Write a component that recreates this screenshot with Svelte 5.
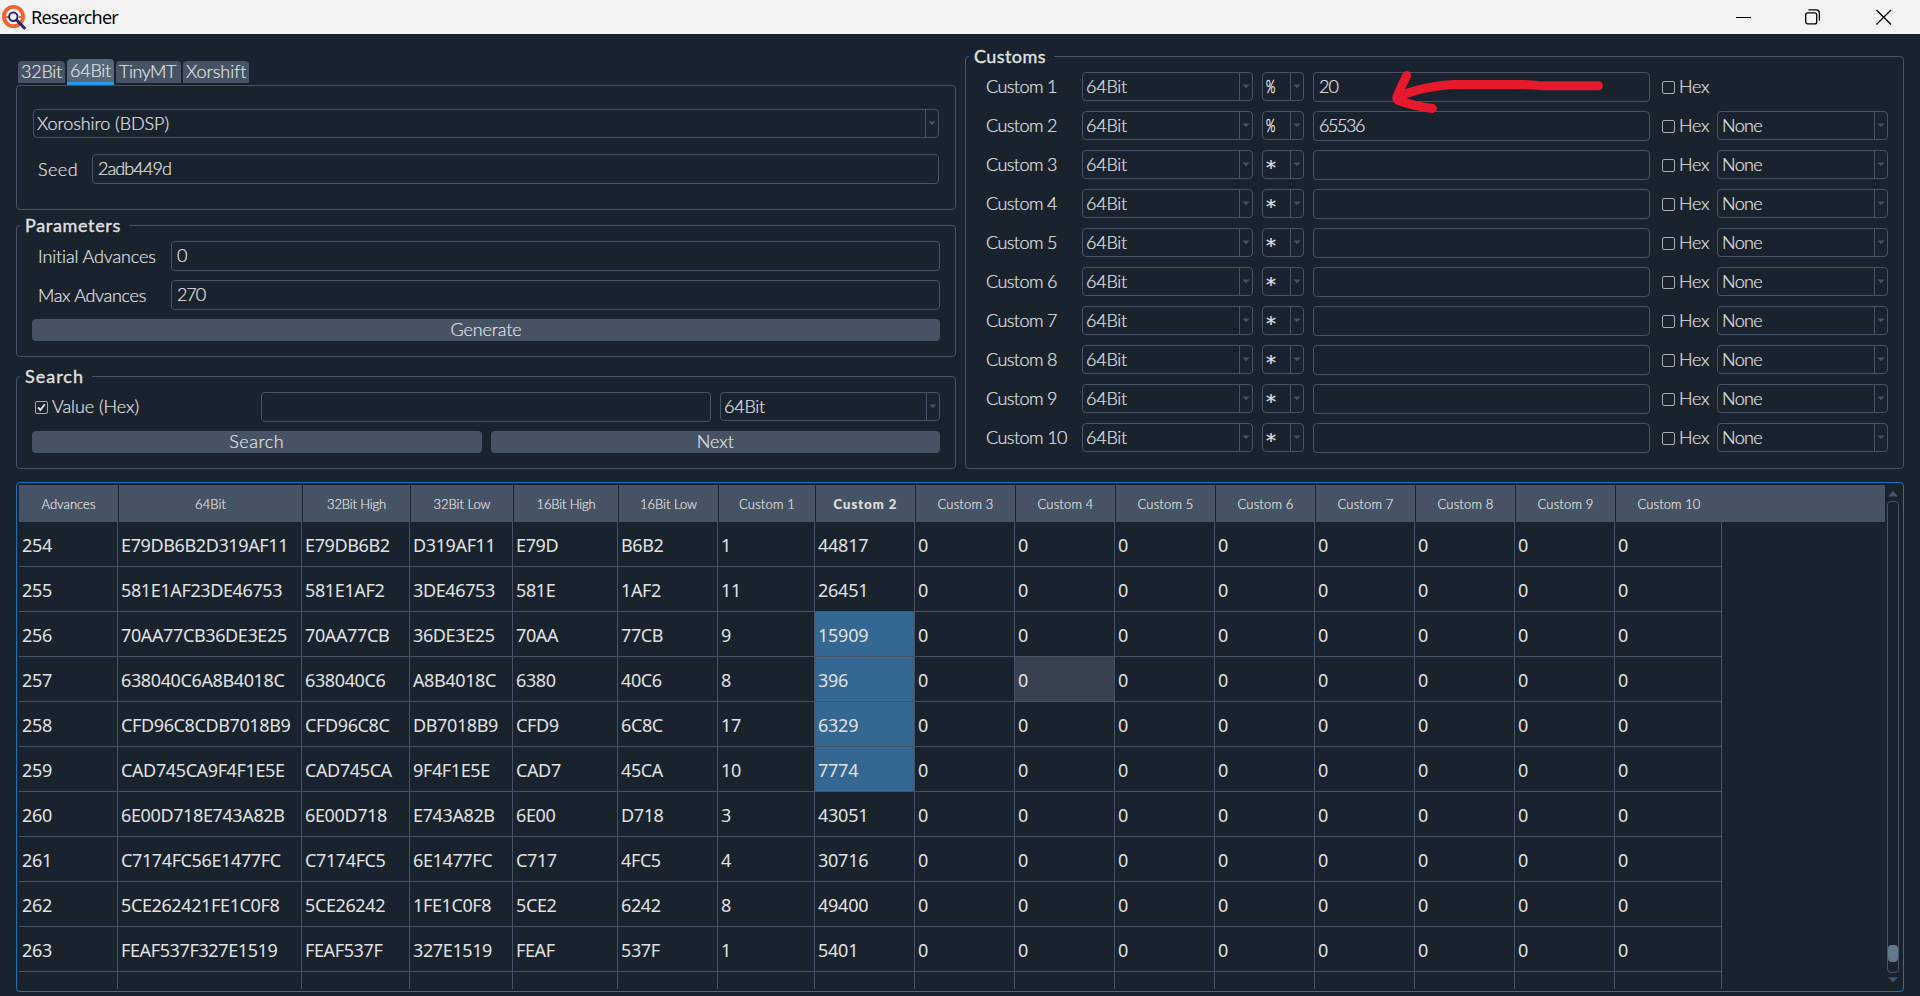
<script>
  function fit(node, width) {
    const apply = (w) => {
      if (!w) return;
      node.style.letterSpacing = '0px';
      const natural = node.getBoundingClientRect().width;
      const count = node.textContent.length;
      node.style.letterSpacing = (w - natural) / count + 'px';
    };
    apply(width);
    return { update: apply };
  }

  const tabs = [
    { label: '32Bit', text: 41, width: 47 },
    { label: '64Bit', text: 41, width: 47, active: true },
    { label: 'TinyMT', text: 57, width: 65 },
    { label: 'Xorshift', text: 60, width: 66 }
  ];

  const customs = Array.from({ length: 10 }, (_, i) => ({
    n: i + 1,
    op: i < 2 ? '%' : '*',
    value: ['20', '65536'][i] ?? '',
    valueWidth: [19, 45][i] ?? 0,
    chained: i > 0
  }));

  const columns = [
    { label: 'Advances', width: 99, text: 54 },
    { label: '64Bit', width: 184, text: 31 },
    { label: '32Bit High', width: 108, text: 59 },
    { label: '32Bit Low', width: 103, text: 57 },
    { label: '16Bit High', width: 105, text: 59 },
    { label: '16Bit Low', width: 100, text: 57 },
    { label: 'Custom 1', width: 97, text: 56 },
    { label: 'Custom 2', width: 100, text: 64, bold: true },
    ...[3, 4, 5, 6, 7, 8, 9].map((n) => ({ label: 'Custom ' + n, width: 100, text: 56 })),
    { label: 'Custom 10', width: 107, text: 63 }
  ];
  const gridColumns = columns.map((c) => c.width + 'px').join(' ');

  const values = [
    ['E79DB6B2D319AF11', 1, 44817],
    ['581E1AF23DE46753', 11, 26451],
    ['70AA77CB36DE3E25', 9, 15909],
    ['638040C6A8B4018C', 8, 396],
    ['CFD96C8CDB7018B9', 17, 6329],
    ['CAD745CA9F4F1E5E', 10, 7774],
    ['6E00D718E743A82B', 3, 43051],
    ['C7174FC56E1477FC', 4, 30716],
    ['5CE262421FE1C0F8', 8, 49400],
    ['FEAF537F327E1519', 1, 5401]
  ];
  const rows = values.map(([hex, c1, c2], i) => [
    254 + i, hex, hex.slice(0, 8), hex.slice(8), hex.slice(0, 4), hex.slice(4, 8), c1, c2,
    ...Array(8).fill(0)
  ]);
  const selected = (r, c) => c === 7 && r >= 2 && r <= 5;
  const hovered = (r, c) => r === 3 && c === 9;
</script>

{#snippet combo(label, width, kind)}
  <div class="combo {kind}">
    <span class="combo-text"><span use:fit={width}>{label}</span></span>
    <span class="drop"><svg width="8" height="5" viewBox="0 0 8 5"><path d="M0.5 0.5H7.5L4 4.3Z" fill="#455364" /></svg></span>
  </div>
{/snippet}

<div class="window">
  <header class="titlebar">
    <svg class="logo" width="26" height="28" viewBox="0 0 26 28">
      <circle cx="11.5" cy="12.5" r="9.6" fill="none" stroke="#f26430" stroke-width="3.8" />
      <path d="M3 13H7M17 13H21" stroke="#f26430" stroke-width="2" />
      <circle cx="11.3" cy="12.8" r="4.2" fill="#f3f3f3" stroke="#2a2a72" stroke-width="2" />
      <path d="M14.6 16L22.2 23.8" stroke="#2a2a72" stroke-width="3" stroke-linecap="square" />
    </svg>
    <span class="app-name"><span use:fit={87}>Researcher</span></span>
    <div class="controls">
      <svg width="16" height="16" viewBox="0 0 16 16"><path d="M0 8.5H15" stroke="#000" /></svg>
      <svg width="16" height="16" viewBox="0 0 16 16" fill="none" stroke="#000" stroke-width="1.3">
        <rect x="0.7" y="3.9" width="11" height="11" rx="2" />
        <path d="M3.4 0.9H11.2A3.4 3.4 0 0 1 14.4 4.2V11.8" />
      </svg>
      <svg width="16" height="16" viewBox="0 0 16 16"><path d="M0.5 1L15 15.5M15 1L0.5 15.5" stroke="#000" stroke-width="1.3" /></svg>
    </div>
  </header>

  <main>
    <div class="top">
      <div class="left">
        <nav class="tabs">
          {#each tabs as tab}
            <div class="tab" class:active={tab.active} style:width="{tab.width}px"><span use:fit={tab.text}>{tab.label}</span></div>
          {/each}
        </nav>
        <section class="pane">
          {@render combo('Xoroshiro (BDSP)', 132, 'wide')}
          <div class="seed-row">
            <label for="seed"><span use:fit={40}>Seed</span></label>
            <div id="seed" class="field"><span use:fit={73}>2adb449d</span></div>
          </div>
        </section>

        <section class="group parameters">
          <h2><span use:fit={96}>Parameters</span></h2>
          <div class="param-row">
            <div class="caption"><span use:fit={118}>Initial Advances</span></div>
            <div class="field"><span use:fit={10}>0</span></div>
          </div>
          <div class="param-row">
            <div class="caption"><span use:fit={108}>Max Advances</span></div>
            <div class="field"><span use:fit={28}>270</span></div>
          </div>
          <div class="button"><span use:fit={71}>Generate</span></div>
        </section>

        <section class="group search">
          <h2><span use:fit={59}>Search</span></h2>
          <div class="search-row">
            <div class="check">
              <span class="box"><svg width="9" height="9" viewBox="0 0 9 9"><path d="M1 4.3L3.4 7L7.8 1.2" fill="none" stroke="#e0e1e3" stroke-width="1.9" /></svg></span>
              <span class="check-text"><span use:fit={87}>Value (Hex)</span></span>
            </div>
            <div class="field"></div>
            {@render combo('64Bit', 41, 'size')}
          </div>
          <div class="buttons">
            <div class="button"><span use:fit={55}>Search</span></div>
            <div class="button"><span use:fit={37}>Next</span></div>
          </div>
        </section>
      </div>

      <section class="group customs">
        <h2><span use:fit={72}>Customs</span></h2>
        {#each customs as c}
          <div class="custom-row">
            <div class="caption"><span use:fit={c.n === 10 ? 81 : 71}>Custom {c.n}</span></div>
            {@render combo('64Bit', 41, 'source')}
            {@render combo(c.op, 0, c.op === '*' ? 'op star' : 'op percent')}
            <div class="field"><span use:fit={c.valueWidth}>{c.value}</span></div>
            <div class="check"><span class="box"></span><span class="check-text"><span use:fit={30}>Hex</span></span></div>
            {#if c.chained}{@render combo('None', 40, 'chain')}{/if}
          </div>
        {/each}
      </section>
    </div>

    <section class="results">
      <div class="table">
        <div class="head" style:grid-template-columns={gridColumns}>
          {#each columns as col}
            <div class="th" class:bold={col.bold}><span use:fit={col.text}>{col.label}</span></div>
          {/each}
        </div>
        <div class="body">
          {#each rows as row, r}
            <div class="row" style:grid-template-columns={gridColumns}>
              {#each row as cell, c}
                <div class="td" class:hex={c > 0 && c < 6} class:selected={selected(r, c)} class:hovered={hovered(r, c)}>{cell}</div>
              {/each}
            </div>
          {/each}
          <div class="row" style:grid-template-columns={gridColumns}>
            {#each columns as _}<div class="td"></div>{/each}
          </div>
        </div>
      </div>
      <div class="scroll">
        <svg width="10" height="6" viewBox="0 0 10 6"><path d="M0 5.5L5 0L10 5.5Z" fill="#455364" /></svg>
        <div class="groove"><div class="thumb"></div></div>
        <svg width="10" height="6" viewBox="0 0 10 6"><path d="M0 0.3L5 5.5L10 0.3Z" fill="#455364" /></svg>
      </div>
    </section>
  </main>

  <svg class="arrow" width="220" height="50" viewBox="1390 68 220 50" fill="none" stroke="#e6192d" stroke-width="9" stroke-linecap="round" stroke-linejoin="round">
    <path d="M1598.5 85.8H1543C1534 85.2 1530 84.4 1522 84.4H1453C1437 85.2 1414 89.5 1398 97" />
    <path d="M1406.7 75.5C1403 83 1398.5 92 1397 97C1396.4 99.5 1398 101 1401 101.5C1410 104.5 1422 107 1432.3 108.5" />
    <path d="M1400 96L1403 99" />
  </svg>
</div>

<style>
  :global(body) { background: #19232d; }
  .window {
    position: relative;
    width: 1920px;
    height: 996px;
    overflow: hidden;
    background: #19232d;
    color: #e0e1e3;
    font: 300 18px/22px Lato, "Liberation Sans", sans-serif;
    white-space: nowrap;
  }
  .window :global(*) { box-sizing: border-box; }
  main { -webkit-text-stroke: 0.2px #e0e1e3; }
  svg { display: block; flex: none; }
  span { display: inline-block; }

  .titlebar {
    display: flex;
    align-items: center;
    height: 34px;
    padding: 0 28px 0 2px;
    background: #f3f3f3;
    color: #000;
  }
  .logo { margin-top: 2px; }
  .app-name { margin: -1px auto 0 3px; font: 400 18px/24px "Noto Sans", sans-serif; }
  .controls { display: flex; gap: 53px; padding-bottom: 1px; }
  .controls svg:last-child { margin-left: 2px; }

  main { padding: 22px 16px 0; }
  .top { display: flex; gap: 9px; height: 413px; }
  .left { display: flex; flex-direction: column; width: 940px; }

  .tabs { display: flex; gap: 2px; padding: 3px 2px 0; height: 29px; }
  .tab {
    margin-top: 2px;
    height: 22px;
    padding: 0 0 0 3px;
    background: #455364;
    border-radius: 4px 4px 0 0;
    line-height: 21px;
  }
  .tab.active { margin-top: 0; height: 26px; background: #54687a; border-bottom: 3px solid #259ae9; line-height: 23px; }

  .pane { height: 125px; padding: 23px 16px 0; border: 1px solid #455364; border-radius: 4px; }
  .seed-row { display: flex; align-items: center; margin-top: 16px; padding-left: 5px; }
  .seed-row label { width: 54px; padding-bottom: 1px; }
  .seed-row .field { flex: 1; }

  .field { height: 30px; padding: 0 5px; border: 1px solid #455364; border-radius: 4px; line-height: 27px; }

  .combo { display: flex; height: 29px; border: 1px solid #455364; border-radius: 4px; line-height: 26px; }
  .combo-text { flex: 1; padding-left: 3px; }
  .drop { width: 13px; border-left: 1px solid #455364; padding: 11px 0 0 2px; }
  .combo.size { width: 220px; }
  .combo.source { width: 171px; margin-right: 9px; }
  .combo.op { width: 42px; margin-right: 9px; }
  .combo.chain { width: 171px; }
  .combo.chain .combo-text { padding-left: 4px; }
  .percent .combo-text span { transform: scaleX(0.66); transform-origin: 0 50%; -webkit-text-stroke-width: 0.5px; }
  .star .combo-text { font: 400 20px/33px "DejaVu Sans", sans-serif; height: 27px; }

  .group { position: relative; border: 1px solid #455364; border-radius: 4px; }
  h2 {
    position: absolute;
    left: 3px;
    top: -12px;
    margin: 0;
    padding: 0 8px 0 5px;
    background: #19232d;
    font: 400 18px/22px Lato, sans-serif;
    -webkit-text-stroke: 0.35px #e0e1e3;
  }

  .parameters { height: 132px; margin-top: 15px; padding: 15px 15px 0; }
  .param-row { display: flex; align-items: center; margin-bottom: 9px; padding-left: 6px; }
  .param-row .caption { width: 133px; padding-bottom: 1px; }
  .param-row .field { flex: 1; }
  .button { flex: 1; height: 22px; background: #455364; border-radius: 4px; text-align: center; line-height: 21px; }

  .search { height: 93px; margin-top: 19px; padding: 15px 15px 0; }
  .search-row { display: flex; height: 39px; padding-left: 3px; }
  .search-row .check { width: 226px; }
  .search-row .field { width: 450px; margin-right: 9px; }
  .check { display: flex; align-items: center; gap: 4px; height: 30px; }
  .check-text { padding-bottom: 2px; }
  .box { flex: none; width: 13px; height: 13px; padding: 1px; border: 1px solid #a9adb2; border-radius: 2px; }
  .buttons { display: flex; gap: 9px; }

  .customs { width: 939px; padding: 15px 15px 0 20px; }
  .custom-row { display: flex; height: 39px; }
  .custom-row .caption { width: 96px; line-height: 28px; }
  .custom-row .field { width: 337px; margin-right: 12px; padding-left: 5px; }
  .custom-row .check { width: 55px; }

  .results {
    display: flex;
    height: 510px;
    margin-top: 13px;
    padding: 2px;
    border: 1px solid #1a72bb;
    border-radius: 4px;
  }
  .table { width: 1866px; height: 504px; overflow: hidden; }
  .head { display: grid; height: 37px; background: #455364; font-size: 13px; line-height: 38px; text-align: center; }
  .th { height: 37px; }
  .th + .th { border-left: 1px solid #19232d; }
  .th.bold { font-weight: 700; }
  .body { height: 467px; overflow: hidden; -webkit-text-stroke-width: 0; }
  .row { display: grid; width: 1703px; height: 45px; font: 400 18px/46px "Noto Sans", sans-serif; letter-spacing: -0.25px; }
  .td { height: 45px; padding-left: 3px; border: solid #455364; border-width: 0 1px 1px 0; }
  .td.hex { letter-spacing: -0.38px; }
  .td.selected { background: #346792; }
  .td.hovered { background: #37414f; }

  .scroll { display: flex; flex-direction: column; align-items: center; gap: 4px; width: 12px; margin-left: 2px; padding-top: 6px; }
  .groove { width: 12px; height: 472px; padding: 443px 0 0; border: 1px solid #455364; border-radius: 4px; }
  .thumb { width: 10px; height: 17px; background: #60798b; border-radius: 4px; }

  .arrow { position: absolute; left: 1390px; top: 68px; }
</style>
